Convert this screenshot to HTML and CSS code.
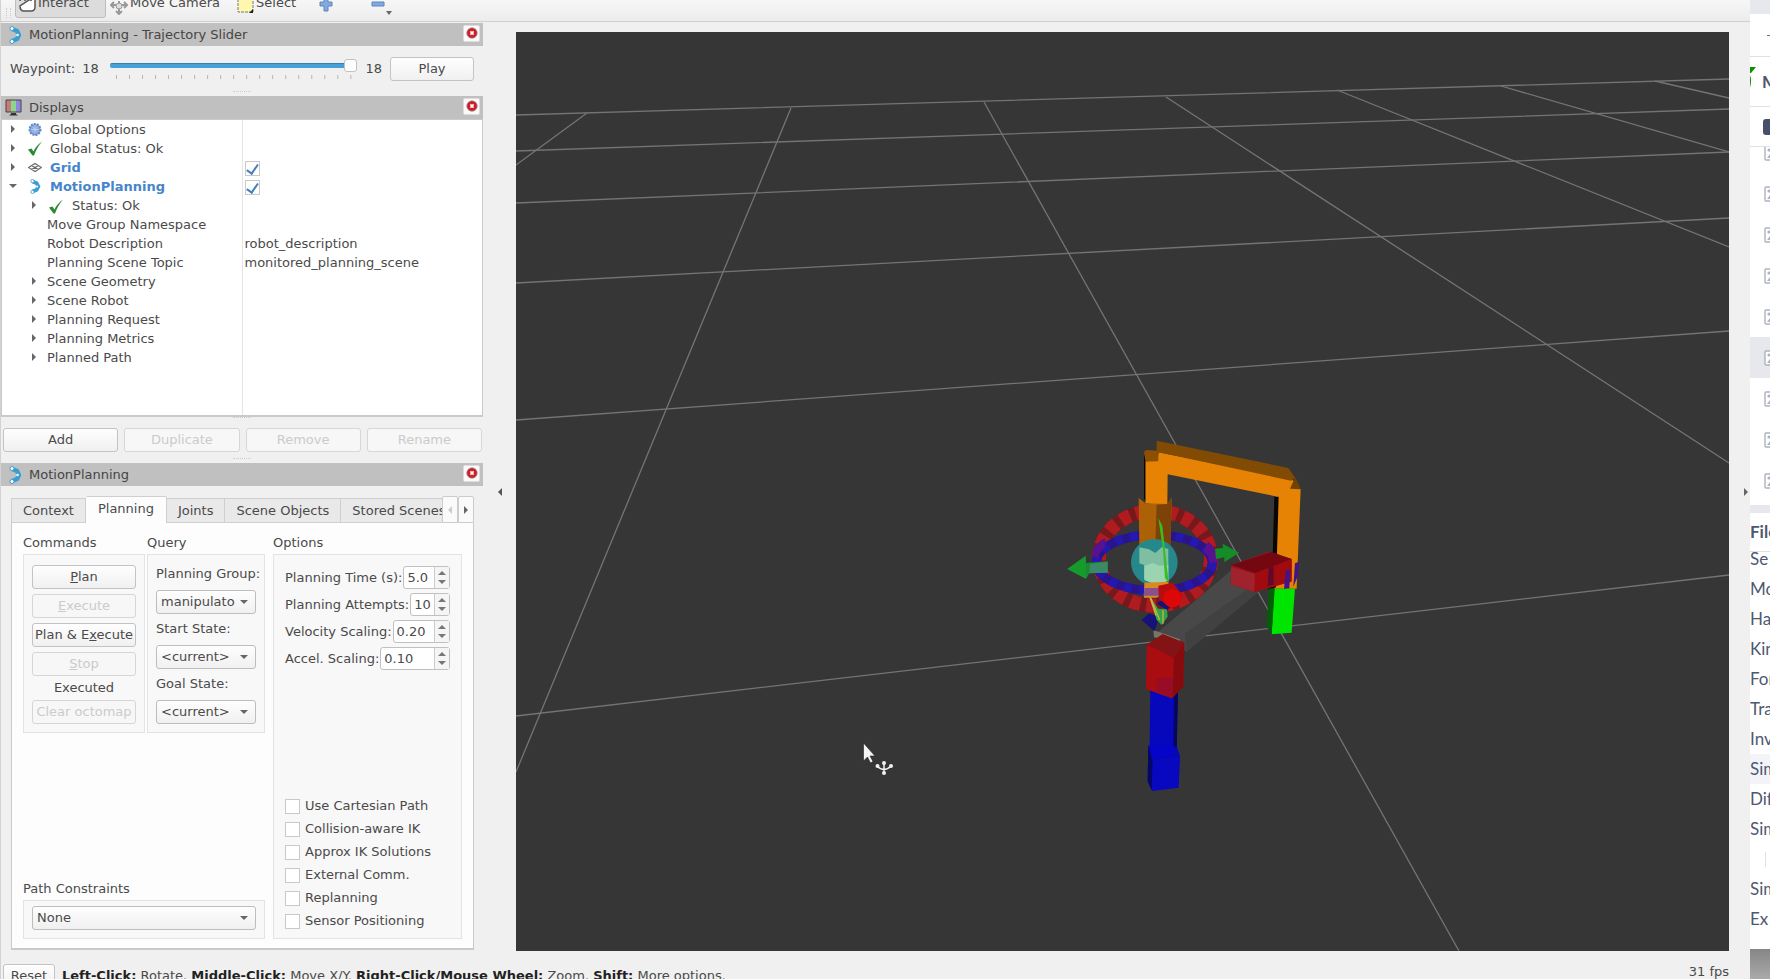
FILE: index.html
```html
<!DOCTYPE html>
<html lang="en">
<head>
<meta charset="utf-8">
<title>MotionPlanning</title>
<link rel="stylesheet" href="styles.css">
</head>
<body>
<svg class="defs" aria-hidden="true">
  <symbol id="i-motion" viewBox="0 0 12 18"><path d="M3 3 8 5 10 9 8 13 3 15" fill="none" stroke="#3a9fd0" stroke-width="4.500"/><circle cx="3" cy="2.500" r="2" fill="#fff" stroke="#3a9fd0"/><circle cx="8.500" cy="9" r="1.300" fill="#fff"/><circle cx="3" cy="15.500" r="2" fill="#fff" stroke="#3a9fd0"/></symbol>
  <symbol id="i-check" viewBox="0 0 14 14"><path d="M0 8 3.500 7l2 3C7 6 10 3 14 0 10 4.500 8 9 6 14H4.500Z" fill="#2c8a35"/></symbol>
  <symbol id="i-right" viewBox="0 0 6 8"><path d="M1 0 5 4 1 8Z" fill="#666"/></symbol>
  <symbol id="i-down" viewBox="0 0 8 6"><path d="M0 1H8L4 5Z" fill="#666"/></symbol>
  <symbol id="i-left" viewBox="0 0 6 8"><path d="M5 0 1 4 5 8Z" fill="currentColor"/></symbol>
  <symbol id="i-close" viewBox="0 0 12 12"><circle cx="6" cy="6" r="5.300" fill="#cb2029" stroke="#a7a0a0" stroke-width=".7"/><path d="m4.400 4.400 3.200 3.200m0-3.200-3.200 3.200" stroke="#fff" stroke-width="1.500"/></symbol>
  <symbol id="i-file" viewBox="0 0 16 16"><rect x="1" y="1" width="14" height="14" rx="1" fill="#fff" stroke="#adb2bf" stroke-width="1.400"/><circle cx="5" cy="5" r="1.600" fill="#adb2bf"/><path d="m3 13 3-4 2 2 3-5 3 7Z" fill="#adb2bf"/></symbol>
</svg>
<div class="screen">
<div class="app">
  <header class="toolbar">
    <span class="grip"></span>
    <button class="tool active"><svg width="17" height="24" viewBox="0 0 17 24"><path d="M1 13q0-2 2-2V7m3 6V6m3 7V6m3 7V6m4 2v11q0 4-4 4H5q-4 0-4-5Z" fill="#fff" stroke="#555" stroke-width="1.500"/></svg>Interact</button>
    <button class="tool camera"><svg width="18" height="24" viewBox="0 0 18 24"><path d="M1 14h16M4 11l-3 3 3 3m10-6 3 3-3 3M6 20l3 3 3-3M9 10v12" fill="none" stroke="#999" stroke-width="2"/><circle cx="9" cy="15" r="3" fill="#ddd" stroke="#999"/></svg>Move Camera</button>
    <button class="tool select"><svg width="17" height="24" viewBox="0 0 17 24"><path d="M1 5h15v16H1Z" fill="#fff7ad" stroke="#777" stroke-dasharray="3 1"/><path d="m12 22 4-4v4Z" fill="#222"/></svg>Select</button>
    <button class="tool plus" aria-label="Add tool"><svg width="14" height="24" viewBox="0 0 14 24"><path d="M5 7h4v6h4v4H9v5H5v-5H1v-4h4Z" fill="#84a9dc" stroke="#5c86c2"/></svg></button>
    <button class="tool minus" aria-label="Remove tool"><svg width="22" height="24" viewBox="0 0 22 24"><path d="M1 13h12v4H1Z" fill="#84a9dc" stroke="#5c86c2"/></svg></button>
    <svg class="more" width="6" height="4" viewBox="0 0 6 4"><path d="M0 0h6L3 4Z" fill="#666"/></svg>
  </header>
  <main class="main">
    <aside class="dock">
      <h2 class="title"><svg class="ic-motion"><use href="#i-motion"/></svg>MotionPlanning - Trajectory Slider<button class="close" aria-label="Close Trajectory Slider"><svg width="12" height="12"><use href="#i-close"/></svg></button></h2>
      <div class="slider-row">
        <label for="waypoint">Waypoint:</label><span class="cur">18</span>
        <div class="slider">
          <input id="waypoint" type="range" min="0" max="18" value="18">
          <svg class="ticks" viewBox="0 0 248 4" preserveAspectRatio="none"><path d="M6 2H243" stroke="#b5b5b5" stroke-width="4" stroke-dasharray="1 12.060"/></svg>
        </div>
        <span class="max">18</span><button class="btn play">Play</button>
      </div>
      <div class="dots"></div>
      <h2 class="title"><svg class="ic-screen" width="17" height="17" viewBox="0 0 17 17"><path d="M1 1h15v12H1Z" fill="#8ed68e"/><path d="M1 1h5v12H1Z" fill="#c77b7b"/><path d="M11 1h5v12h-5Z" fill="#8d87d9"/><path d="M1 1h15v12H1Z" fill="none" stroke="#444"/><path d="M6 14h5v1l2 1.500H4L6 15Z" fill="#333"/></svg>Displays<button class="close" aria-label="Close Displays"><svg width="12" height="12"><use href="#i-close"/></svg></button></h2>
      <div class="tree">
        <table>
          <tr><td class="l0"><svg class="arr"><use href="#i-right"/></svg><svg class="ic" viewBox="0 0 14 14"><circle cx="7" cy="7" r="5.500" fill="#86a6da" stroke="#6488c6" stroke-width="2" stroke-dasharray="2 1"/><path d="M3 7h8M7 3v8M4.200 4.200l5.600 5.600m0-5.600L4.200 9.800" stroke="#c3d3ef" stroke-width=".8"/></svg>Global Options</td><td></td></tr>
          <tr><td class="l0"><svg class="arr"><use href="#i-right"/></svg><svg class="ic"><use href="#i-check"/></svg>Global Status: Ok</td><td></td></tr>
          <tr><td class="l0 on"><svg class="arr"><use href="#i-right"/></svg><svg class="ic" viewBox="0 0 14 14"><path d="M.500 7 7 3l6.500 4L7 11ZM3.500 5l7 4m-7 0 7-4" fill="none" stroke="#666" stroke-width="1.100"/></svg>Grid</td><td><input type="checkbox" checked aria-label="Grid enabled"></td></tr>
          <tr><td class="l0 on"><svg class="arr"><use href="#i-down"/></svg><svg class="ic"><use href="#i-motion"/></svg>MotionPlanning</td><td><input type="checkbox" checked aria-label="MotionPlanning enabled"></td></tr>
          <tr><td class="l1"><svg class="arr"><use href="#i-right"/></svg><svg class="ic wide"><use href="#i-check"/></svg>Status: Ok</td><td></td></tr>
          <tr><td class="l2">Move Group Namespace</td><td></td></tr>
          <tr><td class="l2">Robot Description</td><td>robot_description</td></tr>
          <tr><td class="l2">Planning Scene Topic</td><td>monitored_planning_scene</td></tr>
          <tr><td class="l1"><svg class="arr"><use href="#i-right"/></svg>Scene Geometry</td><td></td></tr>
          <tr><td class="l1"><svg class="arr"><use href="#i-right"/></svg>Scene Robot</td><td></td></tr>
          <tr><td class="l1"><svg class="arr"><use href="#i-right"/></svg>Planning Request</td><td></td></tr>
          <tr><td class="l1"><svg class="arr"><use href="#i-right"/></svg>Planning Metrics</td><td></td></tr>
          <tr><td class="l1"><svg class="arr"><use href="#i-right"/></svg>Planned Path</td><td></td></tr>
          <tr class="rest"><td></td><td></td></tr>
        </table>
      </div>
      <div class="dots"></div>
      <div class="actions"><button class="btn">Add</button><button class="btn" disabled>Duplicate</button><button class="btn" disabled>Remove</button><button class="btn" disabled>Rename</button></div>
      <div class="dots"></div>
      <h2 class="title"><svg class="ic-motion"><use href="#i-motion"/></svg>MotionPlanning<button class="close" aria-label="Close MotionPlanning"><svg width="12" height="12"><use href="#i-close"/></svg></button></h2>
      <div class="tabs">
        <div class="tablist" role="tablist">
          <button class="tab" role="tab">Context</button><button class="tab current" role="tab" aria-selected="true">Planning</button><button class="tab" role="tab">Joints</button><button class="tab" role="tab">Scene Objects</button><button class="tab" role="tab">Stored Scenes</button>
        </div>
        <button class="scroll" disabled aria-label="Previous tabs"><svg class="arr"><use href="#i-left"/></svg></button><button class="scroll" aria-label="Next tabs"><svg class="arr"><use href="#i-right"/></svg></button>
      </div>
      <section class="pane">
        <div class="left">
          <div class="pair">
            <div class="commands">
              <h3>Commands</h3>
              <div class="group stack">
                <button class="btn"><u>P</u>lan</button>
                <button class="btn" disabled><u>E</u>xecute</button>
                <button class="btn">Plan &amp; E<u>x</u>ecute</button>
                <button class="btn" disabled><u>S</u>top</button>
                <span class="state">Executed</span>
                <button class="btn" disabled>Clear octomap</button>
              </div>
            </div>
            <div class="query">
              <h3>Query</h3>
              <div class="group fields">
                <label for="pg">Planning Group:</label><span class="combo"><select id="pg"><option>manipulato</option></select></span>
                <label for="ss">Start State:</label><span class="combo"><select id="ss"><option>&lt;current&gt;</option></select></span>
                <label for="gs">Goal State:</label><span class="combo"><select id="gs"><option>&lt;current&gt;</option></select></span>
              </div>
            </div>
          </div>
          <div class="path">
            <h3><label for="pc">Path Constraints</label></h3>
            <div class="group"><span class="combo"><select id="pc"><option>None</option></select></span></div>
          </div>
        </div>
        <div class="options">
          <h3>Options</h3>
          <div class="group opts">
            <div class="spins">
              <div class="field"><label for="pt">Planning Time (s):</label><span class="spin"><input id="pt" type="text" value="5.0"><span class="steps"><button aria-label="Increase time"></button><button aria-label="Decrease time"></button></span></span></div>
              <div class="field"><label for="pa">Planning Attempts:</label><span class="spin"><input id="pa" type="text" value="10"><span class="steps"><button aria-label="Increase attempts"></button><button aria-label="Decrease attempts"></button></span></span></div>
              <div class="field"><label for="vs">Velocity Scaling:</label><span class="spin"><input id="vs" type="text" value="0.20"><span class="steps"><button aria-label="Increase velocity"></button><button aria-label="Decrease velocity"></button></span></span></div>
              <div class="field"><label for="as">Accel. Scaling:</label><span class="spin"><input id="as" type="text" value="0.10"><span class="steps"><button aria-label="Increase acceleration"></button><button aria-label="Decrease acceleration"></button></span></span></div>
            </div>
            <div class="checks">
              <label><input type="checkbox">Use Cartesian Path</label>
              <label><input type="checkbox">Collision-aware IK</label>
              <label><input type="checkbox">Approx IK Solutions</label>
              <label><input type="checkbox">External Comm.</label>
              <label><input type="checkbox">Replanning</label>
              <label><input type="checkbox">Sensor Positioning</label>
            </div>
          </div>
        </div>
      </section>
    </aside>
    <button class="fold" aria-label="Hide left dock"><svg class="arr"><use href="#i-left"/></svg></button>
    <svg class="view" viewBox="516 32 1213 919" preserveAspectRatio="xMidYMid slice">
      <rect x="516" y="32" width="1213" height="919" fill="#363636"/>
      <g stroke="#747474" stroke-width="1.300" fill="none">
        <path d="M516 115 1729 79M516 151 1729 109M516 203 1729 152M516 283 1729 218M516 420 1729 331M516 716 1729 575"/>
        <path d="M587 113 516 165M791 108 516 772M984 102 1459 951M1166 97 1729 463M1337 90 1729 247M1501 86 1729 152M1655 81 1729 98"/>
      </g>
      <g transform="translate(1040 420) scale(.3333)">
        <path d="M355 635 575 450 660 510 440 695Z" fill="#484848"/>
        <path d="M435 640 640 495 660 512 440 695Z" fill="#414141"/>
        <path d="M340 630 420 658 420 668 342 652Z" fill="#777566"/>
        <ellipse cx="345" cy="415" rx="168" ry="142" fill="none" stroke="#76191c" stroke-width="42"/>
        <ellipse cx="345" cy="415" rx="168" ry="142" fill="none" stroke="#b01b20" stroke-width="42" stroke-dasharray="30 18"/>
        <ellipse cx="343" cy="428" rx="174" ry="84" fill="none" stroke="#29148c" stroke-width="27"/>
        <ellipse cx="343" cy="428" rx="174" ry="84" fill="none" stroke="#2518ae" stroke-width="27" stroke-dasharray="24 22"/>
        <path d="M155 405q5-35 40-50v28q-18 12-20 32M505 365q28 20 28 60l-25 5q-2-25-20-38" fill="#561290"/>
        <path d="M82 447 137 408V429L203 424V457L148 460 138 476Z" fill="#1a8a35"/>
        <path d="M82 447 137 408 138 476Z" fill="#159b2c"/><path d="m150 432 53-6v32l-55 2Z" fill="#3a8a66"/>
        <path d="M525 386 549 384 548 371 597 398 553 427V412L528 417Z" fill="#158d27"/>
        <path d="M316 122 350 124 356 97 755 177 782 208 770 506 703 506 707 229 383 163 382 257 316 250Z" fill="#e68304"/>
        <path d="M312 97 318 90 355 92V123L316 125Z" fill="#8d5000"/>
        <path d="M350 62 745 144 766 174 753 182 356 97 350 123Z" fill="#824b04"/>
        <path d="m750 206 16-34 17 36Z" fill="#6f4202"/>
        <path d="M312 102 316 122V245L312 235ZM703 230 716 230 708 502 684 510 698 415Z" fill="#090705"/>
        <path d="M296 234 316 250 382 252 396 232 390 398 345 400 298 385Z" fill="#ad6107"/>
        <path d="M350 254 382 252 396 232 390 398 345 400Z" fill="#7b4309"/>
        <circle cx="343" cy="427" r="70" fill="#26888b"/>
        <path d="M298 382 327 388 346 399 366 381 385 387V479Q345 502 312 475V435L298 430Z" fill="#7fbea1"/>
        <path d="m314 437 25-8 18 8 28-3v48q-38 17-72-2Z" fill="#9bd4b1"/>
        <path d="M355 295 367 317 386 487 375 475 369 390Z" fill="#39bd24"/>
        <path d="M313 488 386 485 384 512 350 533H312Z" fill="#d98a20"/><path d="M314 504h45v23h-49Z" fill="#8a508e"/>
        <path d="m305 600 22-20 31 12-15 42ZM350 550l32-20 18 17-18 25Z" fill="#161278"/>
        <path d="M355 497 398 488 428 525 416 554 394 564 357 538Z" fill="#b80d0f"/>
        <circle cx="397" cy="535" r="27" fill="#dd0707"/>
        <path d="M330 532 355 566 381 568 383 590 365 615 350 600Z" fill="#31a348"/><path d="m333 535 26 65m10-29v40M330 532l18 55" stroke="#c5b445" stroke-width="4"/>
        <path d="M574 435 683 396 755 417V485L643 516 571 493Z" fill="#961520"/>
        <path d="M574 435 695 396 755 417 645 460Z" fill="#750711"/><path d="m645 460 110-43v65l-112 34Z" fill="#a00b10"/><path d="m573 441 72 20-2 55-70-23Z" fill="#a0222c"/>
        <path d="m686 445 15-6v55l-18 4Z" fill="#600928"/>
        <path d="M738 450h13l-3 55-16 3ZM765 430l12-5-3 42-14 33Z" fill="#421488"/>
        <path d="M703 506H765L755 638 695 643Z" fill="#00e500"/><path d="m686 505 18 1-9 137-15-23Z" fill="#045e08"/>
        <path d="M331 805H414L410 990 329 975Z" fill="#0707bc"/><path d="m402 826 12-12-4 172h-10Z" fill="#06065a"/>
        <path d="M325 976 411 980 420 1009 416 1103 336 1113 323 1083Z" fill="#0708bf"/><path d="m325 976 13 45-3 90-12-28Z" fill="#060667"/><path d="m327 978 82 4 10 27-82 11Z" fill="#0808b0"/><path d="M330 976h72v30l-65 10Z" fill="#0505ca"/>
        <path d="M320 674 368 643 433 668 430 800 395 835 318 807Z" fill="#a90d10"/><path d="M320 674 368 643 433 668 402 713Z" fill="#831315"/><path d="m402 713 31-45-3 132-33 35Z" fill="#870b0e"/>
        <path d="m347 775 53-2-3 62-49-17Z" fill="#980c25"/>
      </g>
      <path d="M863.500 743v18l4-4 3 6 2.500-1.500-3-5.500h5Z" fill="#f4f4f4" stroke="#222" stroke-width=".6"/>
      <g stroke="#f0f0f0" fill="none" stroke-width="1.500"><path d="M884 763v11M877 766q7 7 14 0"/></g><g fill="#f0f0f0"><circle cx="884" cy="763" r="2"/><circle cx="884" cy="773" r="2"/><circle cx="877.500" cy="766" r="2"/><circle cx="891" cy="766" r="2"/></g>
    </svg>
    <button class="fold end" aria-label="Show right dock"><svg class="arr"><use href="#i-right"/></svg></button>
  </main>
  <footer class="status"><button class="btn">Reset</button><p><b>Left-Click:</b> Rotate. <b>Middle-Click:</b> Move X/Y. <b>Right-Click/Mouse Wheel:</b> Zoom. <b>Shift:</b> More options.</p><span class="fps">31 fps</span></footer>
</div>
<aside class="side">
  <div class="strip"></div>
  <div class="bar minusbar"><i></i></div>
  <div class="bar brand"><svg width="6" height="22" viewBox="0 0 6 22"><path d="M0 0h6L1 6H0ZM0 8q2 5 0 13Z" fill="#0a9100"/></svg><b>M</b></div>
  <div class="bar box"><i></i></div>
  <ul class="files">
    <li><svg><use href="#i-file"/></svg></li><li><svg><use href="#i-file"/></svg></li><li><svg><use href="#i-file"/></svg></li><li><svg><use href="#i-file"/></svg></li><li><svg><use href="#i-file"/></svg></li><li class="sel"><svg><use href="#i-file"/></svg></li><li><svg><use href="#i-file"/></svg></li><li><svg><use href="#i-file"/></svg></li><li><svg><use href="#i-file"/></svg></li>
  </ul>
  <h2>File</h2>
  <ul class="outline"><li>Se</li><li>Mo</li><li>Ha</li><li>Kin</li><li>For</li><li>Tra</li><li>Inv</li><li class="sel">Sim</li><li>Dif</li><li>Sim</li><li class="nest"><i></i></li><li>Sim</li><li>Ex</li></ul>
  <div class="end-strip"></div>
</aside>
</div>
</body>
</html>
```
FILE: styles.css
```css
* { box-sizing: border-box; }
body { margin: 0; font: 13px/16px "DejaVu Sans", sans-serif; color: #4a4a4a; overflow: hidden; }
h2, h3, p, ul { margin: 0; padding: 0; font-size: 13px; font-weight: 400; list-style: none; }
button, input, select { font: inherit; color: inherit; margin: 0; }
button { border: 0; padding: 0; background: none; }
.defs { display: none; }
.screen { display: flex; height: 100vh; background: #f0f0f0; }
.app { flex: 1; min-width: 0; display: flex; flex-direction: column; border-left: 1px solid #d2d2d2; }

.toolbar { display: flex; align-items: flex-end; height: 22px; padding: 0 0 3px 5px; overflow: hidden; border-bottom: 1px solid #cfcfcf; background: linear-gradient(#f7f7f7, #ececec); }
.grip { width: 5px; height: 10px; margin-right: 4px; border: dotted #ccc; border-width: 0 1px; }
.tool { display: flex; align-items: center; gap: 2px; height: 30px; padding: 0 3px; border-radius: 3px; white-space: nowrap; }
.active { width: 91px; border: 1px solid #bdbdbd; background: #dcdcdc; }
.active svg { margin-top: -6px; }
.camera { margin-left: 1px; }
.select { margin-left: 11px; }
.plus { margin-left: 17px; }
.minus { margin-left: 32px; }
.plus svg, .minus svg { margin-top: -4px; }
.more { margin: 0 0 3px -10px; }

.main { flex: 1; min-height: 0; display: flex; }
.dock { width: 482px; display: flex; flex-direction: column; padding-top: 1px; }
.title { display: flex; align-items: center; height: 23px; padding: 0 3px 0 4px; background: #c0c0c0; color: #454545; }
.ic-motion { width: 12px; height: 18px; margin: 0 8px 0 4px; }
.ic-screen { margin-right: 7px; }
.close { display: grid; place-items: center; width: 17px; height: 17px; margin: 0 0 3px auto; background: #fafafa; border: 1px solid #ddd; border-radius: 2px; }
.btn { height: 24px; border: 1px solid #c3c3c3; border-radius: 3px; background: linear-gradient(#fefefe, #f0f0f0); white-space: nowrap; text-align: center; }
.btn:disabled { color: #cbcbcb; border-color: #d6d6d6; background: #f7f7f7; }
.slider-row { display: flex; align-items: center; height: 45px; padding: 0 9px; }
.cur { width: 28px; margin-left: 7px; }
.slider { flex: 1; display: flex; flex-direction: column; gap: 2px; }
.slider input { appearance: none; width: 100%; height: 14px; background: none; }
.slider input::-webkit-slider-runnable-track { height: 5px; border-radius: 2px; background: #45a0d8; border-top: 1px solid #3380ae; }
.slider input::-webkit-slider-thumb { appearance: none; width: 13px; height: 13px; margin-top: -5px; background: #fdfdfd; border: 1px solid #c2c2c2; border-radius: 3px; }
.ticks { width: 100%; height: 4px; }
.max { margin: 0 8px; }
.play { width: 84px; }
.dots { width: 18px; height: 5px; margin: 0 auto; border-top: 1px dotted #ccc; }

.tree { height: 298px; overflow: hidden; border: solid #cacaca; border-width: 1px 1px 2px; background: #fff; }
table { width: 100%; height: 100%; border-collapse: collapse; table-layout: fixed; }
tr { height: 19px; }
.rest { height: auto; }
td { padding: 0 2px; white-space: nowrap; line-height: 18px; vertical-align: middle; }
td:first-child { width: 240px; border-right: 1px solid #e4e4e4; }
td svg, td input { vertical-align: middle; }
td svg { margin-bottom: 2px; }
.arr { width: 8px; height: 8px; }
.l0 { padding-left: 7px; }
.l1 { padding-left: 28px; }
.l0 .arr { margin-right: 11px; }
.l1 .arr { margin-right: 9px; }
td.l2 { padding-left: 45px; }
.ic { width: 14px; height: 15px; margin-right: 8px; }
.wide { margin: 0 9px 0 2px; }
.on { color: #4585cb; font-weight: 700; }
input[type=checkbox] { appearance: none; width: 15px; height: 15px; border: 1px solid #c9c9c9; background: #fff; display: inline-grid; place-items: center; }
input[type=checkbox]:checked::after { content: ""; width: 5px; height: 10px; margin-bottom: 2px; border: solid #457fbd; border-width: 0 2px 2px 0; transform: rotate(35deg); }

.actions { display: grid; grid-template-columns: repeat(4, 1fr); gap: 6px; padding: 6px 1px 6px 2px; }
.tabs { display: flex; align-items: flex-end; height: 37px; margin: 0 9px 0 10px; }
.tablist { flex: 1; display: flex; align-items: flex-end; overflow: hidden; }
.tab { flex: none; height: 25px; padding: 0 11px; background: #e9e9e9; border: 1px solid #cfcfcf; border-left-width: 0; }
.tab:first-child { border-left-width: 1px; }
.current { height: 27px; background: #fdfdfd; border-bottom: 0; padding: 0 12px 2px; border-radius: 2px 2px 0 0; }
.scroll { width: 16px; height: 27px; background: #fafafa; border: 1px solid #ccc; border-radius: 2px 2px 0 0; color: #555; }
.scroll:disabled { color: #ccc; }
.pane { flex: 1; min-height: 0; display: flex; gap: 8px; margin: 0 9px 1px 10px; padding: 10px 11px 9px; background: #fdfdfd; border: 1px solid #cacaca; border-width: 0 1px 2px; }
h3 { height: 21px; line-height: 20px; }
.group { background: #f8f8f8; border: 1px solid #e3e3e3; }
.left { display: flex; flex-direction: column; justify-content: space-between; flex: none; width: 242px; }
.pair { display: flex; gap: 2px; }
.commands { flex: none; width: 122px; }
.query { flex: 1; min-width: 0; }
.stack { display: flex; flex-direction: column; gap: 5px; height: 179px; padding: 10px 8px 8px; }
.state { line-height: 14px; text-align: center; }
.fields { display: flex; flex-direction: column; height: 179px; padding: 10px 8px 0; }
.fields label { flex: none; height: 25px; line-height: 18px; white-space: nowrap; }
.fields .combo { flex: none; margin-bottom: 6px; }
.combo { position: relative; display: block; }
.combo::after { content: ""; position: absolute; right: 8px; top: 10px; border: 4px solid transparent; border-top-color: #666; border-bottom: 0; pointer-events: none; }
select { appearance: none; width: 100%; height: 24px; padding: 0 4px; border: 1px solid #bdbdbd; border-radius: 3px; background: linear-gradient(#fefefe, #f0f0f0); }
.path .group { padding: 5px 8px 8px; }
.options { flex: 1; min-width: 0; display: flex; flex-direction: column; }
.opts { flex: 1; display: flex; flex-direction: column; justify-content: space-between; padding: 11px 11px 9px; }
.spins { display: flex; flex-direction: column; gap: 4px; }
.field { display: flex; align-items: center; gap: 1px; white-space: nowrap; }
.spin { flex: 1; display: flex; height: 23px; min-width: 0; border: 1px solid #c0c0c0; border-radius: 3px; background: #fff; }
.spin input { flex: 1; width: 0; min-width: 0; padding: 0 0 0 3px; border: 0; background: none; outline: 0; }
.steps { width: 15px; border-left: 1px solid #ccc; background: #f5f5f5; display: flex; flex-direction: column; justify-content: center; align-items: center; gap: 5px; }
.steps button { border: 4px solid transparent; border-top: 0; border-bottom: 4px solid #777; }
.steps button + button { border-bottom: 0; border-top: 4px solid #777; }
.checks { display: flex; flex-direction: column; gap: 7px; }
.checks label { display: flex; align-items: center; gap: 5px; white-space: nowrap; }

.fold { width: 33px; padding-top: 10px; color: #555; }
.fold.end { width: 21px; text-align: right; }
.view { flex: 1; min-width: 0; height: calc(100% - 10px); margin-top: 10px; display: block; }
.status { display: flex; height: 28px; padding: 13px 21px 0 2px; gap: 7px; }
.status .btn { width: 52px; flex: none; }
.status p { line-height: 24px; white-space: nowrap; }
.status b { color: #222; }
.fps { margin-left: auto; line-height: 16px; white-space: nowrap; }

.side { width: 20px; display: flex; flex-direction: column; overflow: hidden; background: #fff; color: #4e5871; font: 17px/30px Lato, sans-serif; }
.strip { flex: none; height: 14px; background: #e7e8ee; }
.bar { flex: none; display: flex; align-items: center; height: 40px; border-bottom: 1px solid #dfe1e7; }
.minusbar { height: 43px; }
.minusbar i { flex: none; width: 6px; height: 1px; margin-left: 17px; background: #777; }
.brand { height: 50px; gap: 6px; }
.brand svg { flex: none; margin-bottom: 8px; }
.box i { flex: none; width: 16px; height: 16px; margin-left: 13px; border-radius: 3px; background: #475069; }
.files { flex: none; height: 358px; overflow: hidden; display: flex; flex-direction: column; justify-content: flex-end; padding-bottom: 4px; }
.files li { flex: none; display: flex; align-items: center; height: 41px; padding-left: 14px; }
.files svg { flex: none; width: 16px; height: 16px; }
.files .sel { background: #e7e8ee; }
.side h2 { flex: none; height: 47px; padding-top: 4px; border-top: 8px solid #e7e8ee; border-bottom: 1px solid #dfe1e7; font-size: 17px; font-weight: 700; }
.outline { flex: 1; min-height: 0; overflow: hidden; display: flex; flex-direction: column; justify-content: flex-end; padding-bottom: 15px; font-size: 17px; }
.outline li { flex: none; height: 30px; }
.outline .sel { background: #f3f4f9; }
.nest i { display: block; width: 1px; height: 15px; margin: 8px 0 0 15px; background: #dfe1e7; }
.end-strip { flex: none; height: 30px; background: linear-gradient(#858585, #aaa); }
```
